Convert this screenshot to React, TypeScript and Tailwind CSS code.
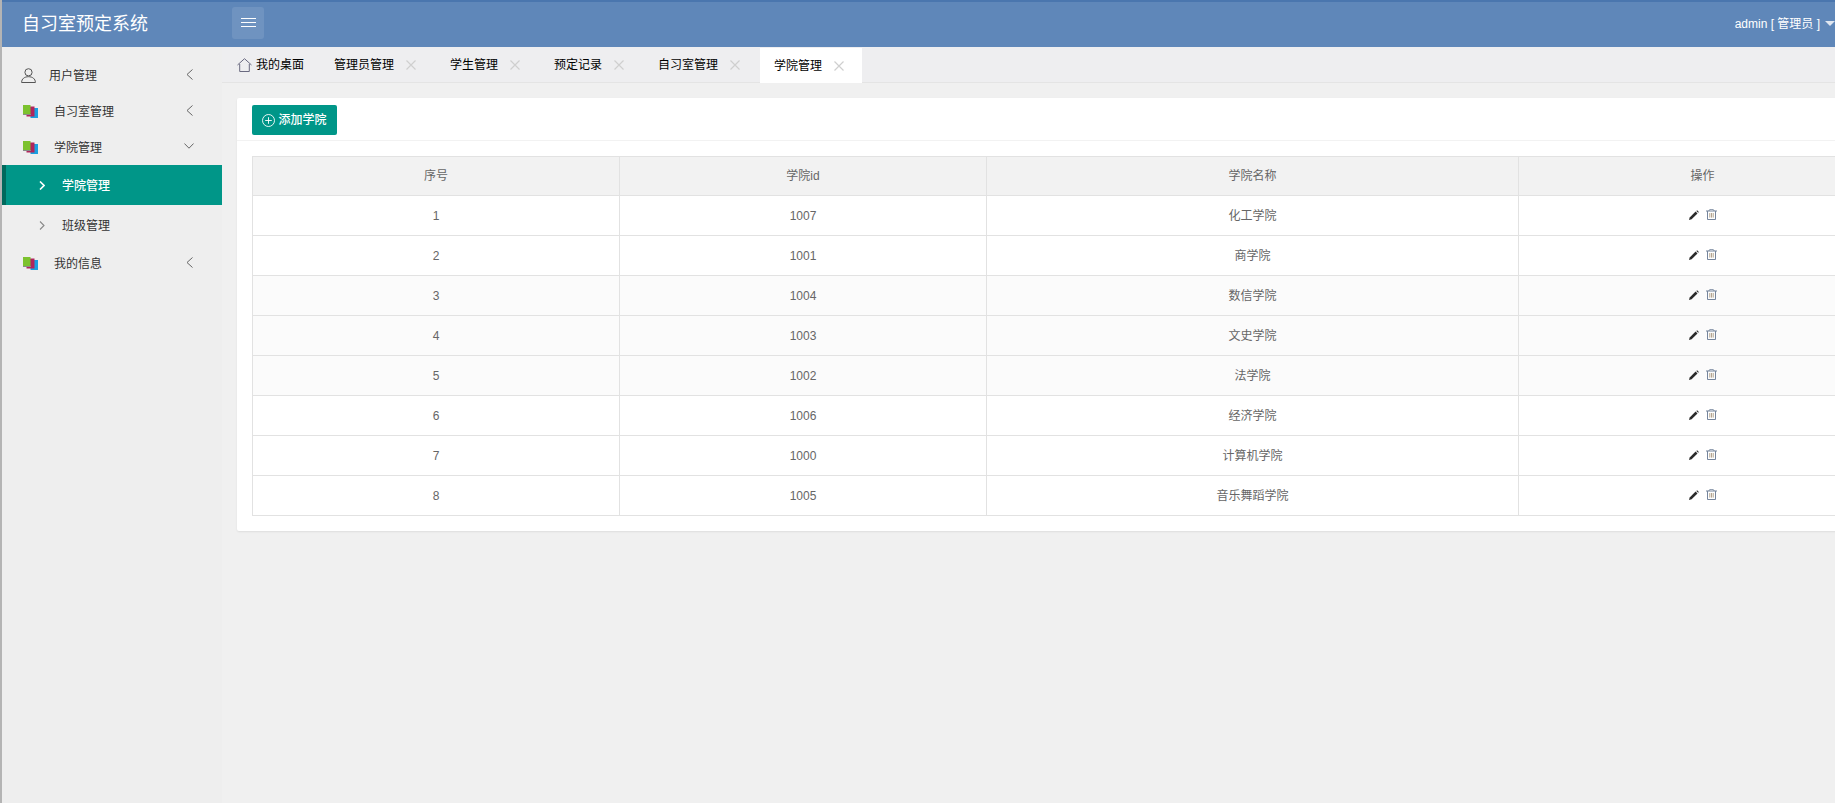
import React from "react";

const FONT = "font-['Liberation_Sans','Noto_Sans_CJK_SC',sans-serif]";

const rows = [
  { no: 1, id: 1007, name: "化工学院" },
  { no: 2, id: 1001, name: "商学院" },
  { no: 3, id: 1004, name: "数信学院" },
  { no: 4, id: 1003, name: "文史学院" },
  { no: 5, id: 1002, name: "法学院" },
  { no: 6, id: 1006, name: "经济学院" },
  { no: 7, id: 1000, name: "计算机学院" },
  { no: 8, id: 1005, name: "音乐舞蹈学院" },
];

const tabs = ["管理员管理", "学生管理", "预定记录", "自习室管理"];

const Books = () => (
  <svg width="15" height="13" viewBox="0 0 15 13" className="shrink-0">
    <rect x="7.5" y="3" width="7.5" height="10" fill="#1a9fe0" />
    <rect x="3.5" y="1.5" width="8" height="10" fill="#b0245c" />
    <rect x="0" y="0" width="7.5" height="9.5" fill="#7cc22e" />
    <rect x="0" y="9" width="8" height="1" fill="#8a8a8a" />
  </svg>
);

const ChevronLeft = () => (
  <svg width="7" height="11" viewBox="0 0 7 11" fill="none" stroke="#666" strokeWidth="1" className="mb-[2px] shrink-0">
    <path d="M6.5 0.5 L1 5.5 L6.5 10.5" />
  </svg>
);

const ChevronDown = () => (
  <svg width="10" height="6" viewBox="0 0 10 6" fill="none" stroke="#666" strokeWidth="1" className="-mr-px mb-[2px] shrink-0">
    <path d="M0.4 0.5 L5 5.2 L9.6 0.5" />
  </svg>
);

const ChevronRight = ({ color, width }: { color: string; width: number }) => (
  <svg width="6" height="9" viewBox="0 0 6 9" fill="none" stroke={color} strokeWidth={width} className="shrink-0">
    <path d="M1 0.5 L5 4.5 L1 8.5" />
  </svg>
);

const CloseIcon = () => (
  <svg width="10" height="10" viewBox="0 0 10 10" stroke="#cfcfcf" strokeWidth="1.2" className="shrink-0">
    <path d="M0.5 0.5 L9.5 9.5 M9.5 0.5 L0.5 9.5" />
  </svg>
);

const MenuItem = ({ label, open }: { label: string; open?: boolean }) => (
  <div className="flex h-9 items-center pl-[21px] pr-[29px] text-xs text-[#333]">
    <Books />
    <span className="ml-[16px] flex-1 pt-[2px]">{label}</span>
    {open ? <ChevronDown /> : <ChevronLeft />}
  </div>
);

export default function App() {
  return (
    <div className={`flex h-screen w-full flex-col overflow-hidden border-l-2 border-[#b4b4b4] bg-[#f0f0f0] ${FONT}`}>
      <header className="flex h-[47px] shrink-0 items-center border-t-2 border-[#4a76ae] bg-[#5f87b9] text-white">
        <div className="w-[220px] pl-[20px] pb-[2px] text-lg">自习室预定系统</div>
        <button className="ml-[10px] mb-[4px] flex h-8 w-8 flex-col items-center justify-center gap-[3px] rounded-[3px] bg-white/10">
          <span className="h-px w-[15px] bg-white" />
          <span className="h-px w-[15px] bg-white" />
          <span className="h-px w-[15px] bg-white" />
        </button>
        <div className="ml-auto mb-[2px] flex items-center text-xs">
          <span>admin [ 管理员 ]</span>
          <span className="ml-[5px] mb-[1px] h-0 w-0 border-x-[5px] border-t-[5px] border-x-transparent border-t-[#dfe6f0]" />
        </div>
      </header>

      <div className="flex min-h-0 flex-1">
        <aside className="w-[220px] shrink-0 bg-[#eeeeee] pt-[10px]">
          <div className="flex h-9 items-center pl-[19px] pr-[29px] text-xs text-[#333]">
            <svg width="15" height="15" viewBox="0 0 15 15" fill="none" stroke="#555" strokeWidth="1" className="shrink-0">
              <circle cx="7.5" cy="4.3" r="3.6" />
              <path d="M0.6 14.5 C0.6 10.8 3.5 8.7 7.5 8.7 C11.5 8.7 14.4 10.8 14.4 14.5 Z" />
            </svg>
            <span className="ml-[13px] flex-1 pt-[2px]">用户管理</span>
            <ChevronLeft />
          </div>
          <MenuItem label="自习室管理" />
          <MenuItem label="学院管理" open />
          <div className="flex h-10 items-center border-l-4 border-[#00695c] bg-[#009688] pl-[33px] text-xs font-medium text-white">
            <ChevronRight color="#fff" width={1.6} />
            <span className="ml-[17px] pt-[2px]">学院管理</span>
          </div>
          <div className="flex h-10 items-center pl-[37px] text-xs text-[#333]">
            <ChevronRight color="#888" width={1.1} />
            <span className="ml-[17px] pt-[2px]">班级管理</span>
          </div>
          <MenuItem label="我的信息" />
        </aside>

        <main className="min-w-0 flex-1 overflow-hidden">
          <div className="flex h-9 items-end border-b border-[#e4e4e4] bg-[#eeeef0] pl-px text-xs text-black">
            <div className="flex h-[35px] items-center pl-[14px] pr-[14px]">
              <svg width="15" height="14" viewBox="0 0 15 14" fill="none" stroke="#6a6a80" strokeWidth="1" className="mr-[4px]">
                <path d="M0.5 7 L7.5 0.7 L14.5 7 M2.7 6 V13.5 H12.3 V6" />
              </svg>
              我的桌面
            </div>
            {tabs.map((tab) => (
              <div key={tab} className="ml-[2px] flex h-[35px] items-center gap-3 pl-[14px] pr-[18px]">
                {tab}
                <CloseIcon />
              </div>
            ))}
            <div className="ml-[2px] mb-[-1px] flex h-[35px] items-center gap-3 bg-white pl-[14px] pr-[18px]">
              学院管理
              <CloseIcon />
            </div>
          </div>

          <div className="ml-[15px] mt-[15px] w-[1664px] rounded-[2px] bg-white pb-[15px] shadow-[0_1px_2px_rgba(0,0,0,0.08)]">
            <div className="flex h-[43px] items-start border-b border-[#f2f2f2] pl-[15px] pt-[7px]">
              <button className="flex h-[30px] w-[85px] items-center justify-center gap-[3px] rounded-[2px] bg-[#009688] text-xs font-medium text-white">
                <svg width="13" height="13" viewBox="0 0 13 13" fill="none" stroke="#fff" strokeWidth="0.9">
                  <circle cx="6.5" cy="6.5" r="6" />
                  <path d="M6.5 3.2 V9.8 M3.2 6.5 H9.8" />
                </svg>
                添加学院
              </button>
            </div>
            <div className="ml-[15px] mt-[15px]">
              <table className="w-[1634px] table-fixed border-collapse border border-[#e2e2e2] text-center text-xs text-[#666]">
                <colgroup>
                  <col className="w-[367px]" />
                  <col className="w-[367px]" />
                  <col className="w-[532px]" />
                  <col className="w-[368px]" />
                </colgroup>
                <thead>
                  <tr className="h-[39px] bg-[#f2f2f2]">
                    <th className="border border-[#e2e2e2] font-normal">序号</th>
                    <th className="border border-[#e2e2e2] font-normal">学院id</th>
                    <th className="border border-[#e2e2e2] font-normal">学院名称</th>
                    <th className="border border-[#e2e2e2] font-normal">操作</th>
                  </tr>
                </thead>
                <tbody>
                  {rows.map((row) => (
                    <tr key={row.no} className={row.no >= 3 && row.no <= 5 ? "h-10 bg-[#fbfbfb]" : "h-10 bg-white"}>
                      <td className="border border-[#e2e2e2]">{row.no}</td>
                      <td className="border border-[#e2e2e2]">{row.id}</td>
                      <td className="border border-[#e2e2e2]">{row.name}</td>
                      <td className="border border-[#e2e2e2]">
                        <div className="flex items-center justify-center gap-[7px]">
                          <svg width="10" height="10" viewBox="0 0 10 10" className="mb-[2px]">
                            <path d="M0 10 L0.7 7.4 L6.6 1.6 L8.5 3.5 L2.6 9.3 Z" fill="#2a2a2a" />
                            <path d="M7.3 0.9 L8.1 0.2 L9.9 2 L9.2 2.8 Z" fill="#2a2a2a" />
                          </svg>
                          <svg width="11" height="11" viewBox="0 0 11 11" fill="none" stroke="#75859c" strokeWidth="1" className="mb-[2px]">
                            <path d="M0 2 H11 M3 2 C3 0.6 3.6 0.5 5.5 0.5 C7.4 0.5 8 0.6 8 2 M1.5 2 V10.5 H9.5 V2" />
                            <path d="M3.8 4 V8.6 M5.5 4 V8.6 M7.2 4 V8.6" stroke="#b3a48f" />
                          </svg>
                        </div>
                      </td>
                    </tr>
                  ))}
                </tbody>
              </table>
            </div>
          </div>
        </main>
      </div>
    </div>
  );
}
